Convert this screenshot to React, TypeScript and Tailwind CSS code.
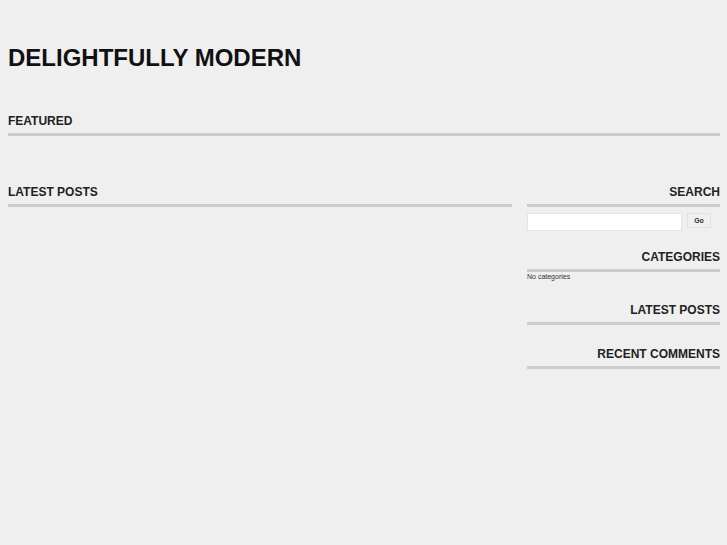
import React from "react";

const Heading = ({ title, right = false }: { title: string; right?: boolean }) => (
  <h3
    className={`text-[12px] leading-4 font-bold text-[#222] uppercase pt-[1px] pb-[4px] border-b-[3px] border-[#cccccc] ${
      right ? "text-right" : ""
    }`}
  >
    {title}
  </h3>
);

const App = () => {
  return (
    <div
      className="min-h-[545px] w-full bg-[#efefef] overflow-hidden"
      style={{ fontFamily: '"Liberation Sans", Arial, sans-serif' }}
    >
      <div className="ml-2 w-[712px]">
        {/* Header */}
        <h1 className="pt-[44px] text-[24px] leading-[28px] font-bold text-[#111]">
          DELIGHTFULLY MODERN
        </h1>

        {/* Featured */}
        <div className="mt-[40px]">
          <Heading title="Featured" />
        </div>

        <div className="mt-[47px] flex gap-[15px]">
          {/* Main column */}
          <div className="w-[504px]">
            <Heading title="Latest Posts" />
          </div>

          {/* Sidebar */}
          <div className="w-[193px]">
            <Heading title="Search" right />
            <form className="mt-[6px] flex items-start gap-[5px]" onSubmit={(e) => e.preventDefault()}>
              <input
                type="text"
                className="w-[155px] h-[18px] bg-white border border-[#e4e4e4] outline-none"
              />
              <button
                type="submit"
                className="w-[24px] h-[15px] border border-[#e2e2e2] bg-[#efefef] text-[7px] font-bold text-[#333] leading-none"
              >
                Go
              </button>
            </form>

            <div className="mt-[17px]">
              <Heading title="Categories" right />
              <p className="text-[7px] leading-[10px] text-[#333]">No categories</p>
            </div>

            <div className="mt-[19px]">
              <Heading title="Latest Posts" right />
            </div>

            <div className="mt-[20px]">
              <Heading title="Recent Comments" right />
            </div>
          </div>
        </div>
      </div>
    </div>
  );
};

export default App;
